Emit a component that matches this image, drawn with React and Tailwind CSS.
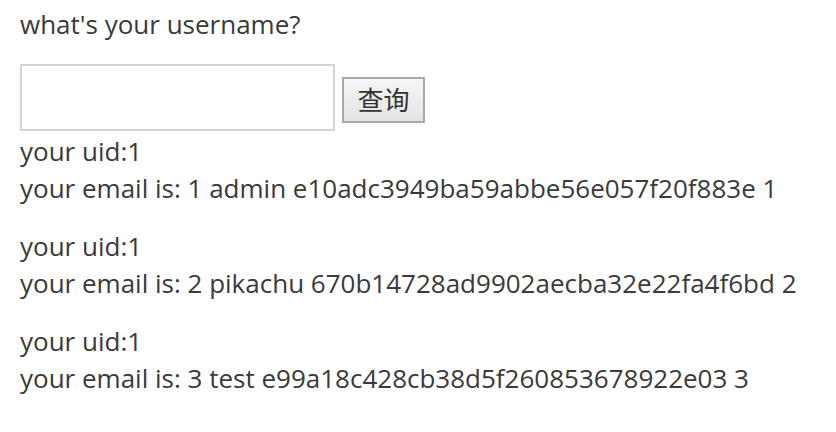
import React from 'react';

const rows = [
  { uid: 1, email: '1 admin e10adc3949ba59abbe56e057f20f883e 1' },
  { uid: 1, email: '2 pikachu 670b14728ad9902aecba32e22fa4f6bd 2' },
  { uid: 1, email: '3 test e99a18c428cb38d5f260853678922e03 3' },
];

export default function App() {
  return (
    <div
      className="min-h-[432px] w-[836px] bg-white px-5 pt-[6px] text-[26px] leading-[37px] text-[#3a3a3a]"
      style={{ fontFamily: '"Open Sans", "Noto Sans CJK SC", sans-serif' }}
    >
      <p>what's your username?</p>
      <form className="mt-[21px] flex items-start gap-[7px]" onSubmit={(e) => e.preventDefault()}>
        <input
          type="text"
          className="h-[67px] w-[315px] border-2 border-[#d4d4d4] bg-white outline-none"
        />
        <button
          type="submit"
          className="mt-[13px] h-[46px] w-[83px] border-2 border-[#a9a9a9] bg-gradient-to-b from-[#f6f6f6] to-[#e4e4e4] text-[26px] leading-none text-[#333]"
        >
          查询
        </button>
      </form>
      <div className="mt-[2px] flex flex-col gap-[21px]">
        {rows.map((r, i) => (
          <p key={i}>
            your uid:{r.uid}
            <br />
            your email is: {r.email}
          </p>
        ))}
      </div>
    </div>
  );
}
